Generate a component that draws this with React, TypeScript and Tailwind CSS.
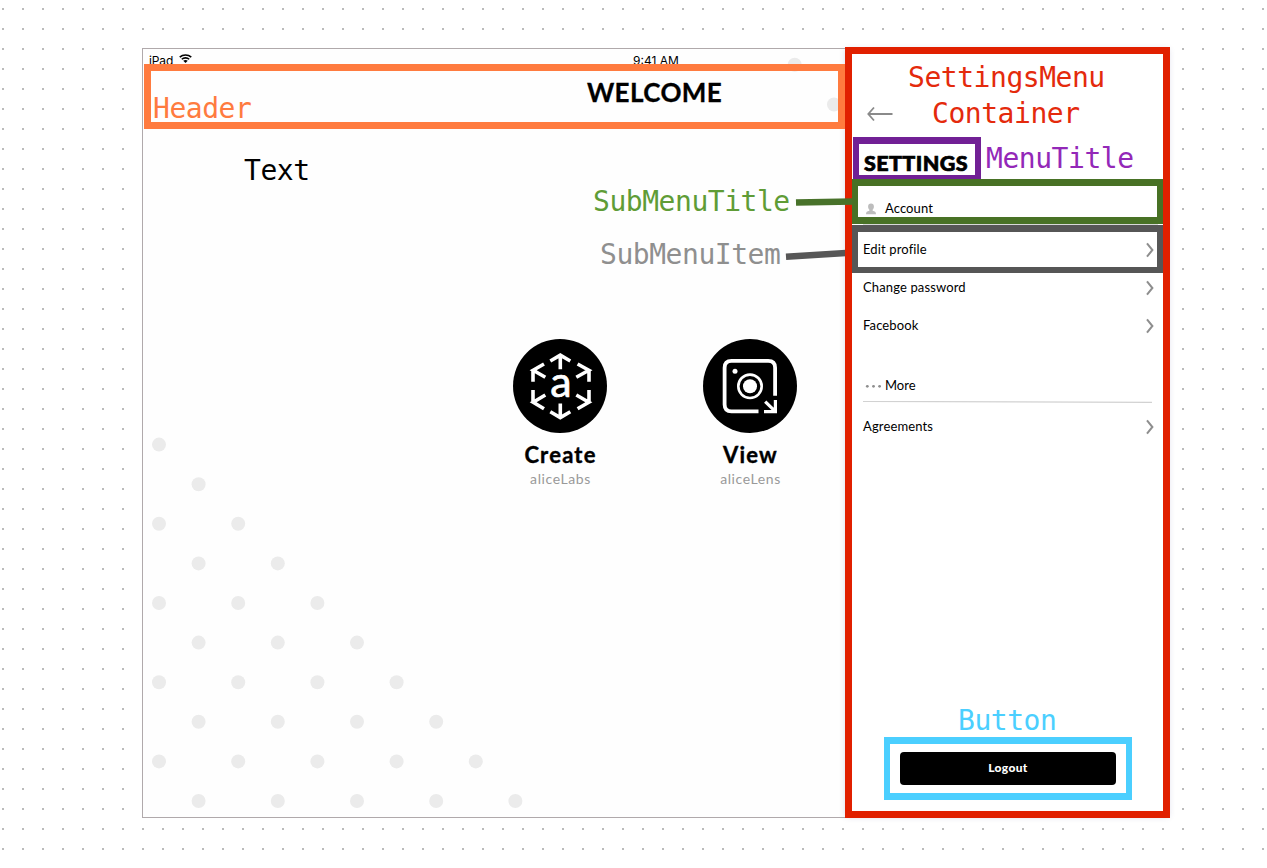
import React from "react";

const label =
  "absolute whitespace-pre font-['DejaVu_Sans_Mono',monospace] text-[28px] leading-none tracking-[-0.46px]";

function DotPattern() {
  const dots: [number, number][] = [];
  for (let row = 0; row < 10; row++) {
    for (let col = row % 2; col <= row; col += 2) {
      dots.push([16 + col * 39.6, 395.6 + row * 39.6]);
    }
  }
  dots.push([651.7, 15.7], [691, 55.5]);
  return (
    <svg className="absolute inset-0" width="1026" height="768" fill="#ebebeb">
      {dots.map(([x, y]) => (
        <circle key={`${x}-${y}`} cx={x} cy={y} r="7" />
      ))}
    </svg>
  );
}

function WifiIcon() {
  return (
    <svg className="mt-[1px]" width="13" height="9.3" viewBox="0 0 14 10" fill="none" stroke="#000" strokeWidth="1.7">
      <path d="M0.8 3.4C4.2 0.2 9.8 0.2 13.2 3.4" />
      <path d="M3 5.7C5.2 3.6 8.8 3.6 11 5.7" />
      <path d="M7 9.6L4.6 7.2C6 6.2 8 6.2 9.4 7.2Z" fill="#000" stroke="none" />
    </svg>
  );
}

function CreateIcon() {
  return (
    <svg width="94" height="94" viewBox="0 0 94 94">
      <circle cx="47" cy="47" r="47" />
      <g fill="none" stroke="#fff" strokeWidth="3.6">
        <path d="M47.3 16.5V30.3M37.3 22L47.3 16.2L57.3 22" />
        <path d="M47.3 64.5V78.5M37.3 72.8L47.3 78.6L57.3 72.8" />
        <path d="M20 42.8V30.6M31 25L20.2 31.2L32.3 38.2" />
        <path d="M76 42.8V30.6M64.6 25L75.8 31.2L63.3 38.2" />
        <path d="M20 51V63.6M31 69.8L20.2 63.2L32.3 56" />
        <path d="M76 51V63.6M64.6 69.8L75.8 63.2L63.3 56" />
      </g>
      <text
        x="48"
        y="57.8"
        textAnchor="middle"
        fill="#fff"
        stroke="#fff"
        strokeWidth="0.7"
        className="font-['Lato',sans-serif] text-[43px] font-normal"
      >
        a
      </text>
    </svg>
  );
}

function ViewIcon() {
  return (
    <svg width="94" height="94" viewBox="0 0 94 94">
      <circle cx="47" cy="47" r="47" />
      <g fill="none" stroke="#fff">
        <path strokeWidth="3.8" d="M72.1 56.7V28.8Q72.1 21.9 65.2 21.9H28.5Q21.6 21.9 21.6 28.8V65.5Q21.6 72.4 28.5 72.4H55.5" />
        <circle cx="47" cy="47.3" r="11.7" strokeWidth="2.6" />
        <path strokeWidth="3.2" d="M72.4 61V72.6H61M62.2 62.6L72 72.2" />
      </g>
      <circle cx="47" cy="47.3" r="7" fill="#fff" />
      <circle cx="32" cy="32.2" r="2.5" fill="#fff" />
    </svg>
  );
}

function Tile({ icon, title, subtitle }: { icon: React.ReactNode; title: string; subtitle: string }) {
  return (
    <div className="flex w-[94px] flex-col items-center">
      {icon}
      <div className="mt-[8px] pl-[1px] text-[22px] leading-7 font-bold tracking-[1.2px] [-webkit-text-stroke:0.4px_black]">
        {title}
      </div>
      <div className="pl-[1px] text-[14px] leading-5 tracking-[0.6px] text-[#999]">{subtitle}</div>
    </div>
  );
}

function MenuItem({ text }: { text: string }) {
  return (
    <div className="flex h-[38px] items-center justify-between pr-[15px] text-[13px] tracking-[0.13px]">
      <span>{text}</span>
      <svg width="8" height="16" viewBox="0 0 8 16" fill="none" stroke="#8e8e8e" strokeWidth="2">
        <path d="M1 1.3L6.4 8L1 14.7" />
      </svg>
    </div>
  );
}

function SettingsDrawer() {
  return (
    <aside className="absolute top-0 right-0 flex h-[768px] w-[324px] flex-col bg-white pl-[18px] shadow-[0_0_6px_rgba(60,60,140,0.18)]">
      <div className="mt-[50px] flex h-[30px] items-center pl-[4px]">
        <svg width="26" height="16" viewBox="0 0 26 16" fill="none" stroke="#8a8a8a" strokeWidth="1.8">
          <path d="M25.5 8H1.5M7 1.5L1.3 8L7 14.5" />
        </svg>
      </div>
      <h2 className="mt-[19px] pl-[1px] text-[21.5px] leading-[30px] font-black tracking-[0.4px] [-webkit-text-stroke:0.7px_black]">
        SETTINGS
      </h2>
      <div className="mt-[16px] mr-[11px] flex h-[31px] items-center border-b border-[#d8d8d8] text-[13px]">
        <svg className="ml-[3px]" width="10" height="12" viewBox="0 0 11 12" fill="#bdbdbd">
          <path d="M5.5 0C7.6 0 8.7 1.3 8.7 3.2C8.7 5 8 6.2 7.3 6.9V8C9.8 8.5 11 9.2 11 11.8H0C0 9.2 1.2 8.5 3.7 8V6.9C3 6.2 2.3 5 2.3 3.2C2.3 1.3 3.4 0 5.5 0Z" />
        </svg>
        <span className="ml-[9px] tracking-[0.1px]">Account</span>
      </div>
      <div className="mt-[6px]">
        <MenuItem text="Edit profile" />
        <MenuItem text="Change password" />
        <MenuItem text="Facebook" />
      </div>
      <div className="mt-[26px] flex h-[30px] items-center text-[13px]">
        <svg className="ml-[2px]" width="17" height="4" viewBox="0 0 17 4" fill="#8e8e8e">
          <circle cx="2.3" cy="2.3" r="1.4" />
          <circle cx="8.5" cy="2.3" r="1.4" />
          <circle cx="14.6" cy="2.3" r="1.4" />
        </svg>
        <span className="ml-[3px]">More</span>
      </div>
      <svg width="290" height="2" viewBox="0 0 290 2">
        <path d="M0 .4L289 1.3" stroke="#d2d2d2" strokeWidth="1.2" />
      </svg>
      <div className="mt-[5px]">
        <MenuItem text="Agreements" />
      </div>
      <button className="mt-auto mb-[32px] ml-[37px] h-[33px] w-[216px] rounded-[4px] bg-black pb-[2px] text-[12px] font-black tracking-[0.35px] text-white">
        Logout
      </button>
    </aside>
  );
}

function Annotations() {
  return (
    <div className="pointer-events-none absolute inset-0">
      <div className="absolute top-[64px] left-[144px] h-[65px] w-[701px] border-[7px] border-[#ff7b3f]" />
      <svg className="absolute inset-0" width="1267" height="868">
        <path d="M786 256.7L850 252.8" stroke="#575757" strokeWidth="6.5" />
      </svg>
      <div className="absolute top-[47px] left-[845px] h-[771px] w-[325px] border-[7px] border-[#e12000]" />
      <svg className="absolute inset-0" width="1267" height="868">
        <path d="M796 202.6L853 201.4" stroke="#48722a" strokeWidth="6.5" />
      </svg>
      <div className="absolute top-[137px] left-[853px] h-[45px] w-[128px] border-x-[6px] border-y-[7px] border-[#712095]" />
      <div className="absolute top-[179px] left-[852px] h-[45px] w-[311px] border-x-[6px] border-y-[7px] border-[#487125]" />
      <div className="absolute top-[225px] left-[852px] h-[48px] w-[311px] border-x-[6px] border-t-[7px] border-b-[6px] border-[#565656]" />
      <div className="absolute top-[737px] left-[884px] h-[63px] w-[248px] border-[7px] border-x-[6px] border-[#4bcfff]" />

      <span className={`${label} top-[95px] left-[153px] text-[#ff7b3f]`}>Header</span>
      <span className={`${label} top-[157px] left-[244px] text-black`}>Text</span>
      <span className={`${label} top-[188px] left-[593px] text-[#5f9c36]`}>SubMenuTitle</span>
      <span className={`${label} top-[241px] left-[600px] text-[#8f8f8f]`}>SubMenuItem</span>
      <span className={`${label} top-[64px] left-[908px] text-[#e42a0c]`}>SettingsMenu</span>
      <span className={`${label} top-[100px] left-[932px] text-[#e42a0c]`}>Container</span>
      <span className={`${label} top-[145px] left-[986px] text-[#9328b8]`}>MenuTitle</span>
      <span className={`${label} top-[707px] left-[958px] text-[#4bcfff]`}>Button</span>
    </div>
  );
}

export default function App() {
  return (
    <div className="relative h-[868px] w-[1267px] overflow-hidden bg-white bg-[linear-gradient(#fff_18px,transparent_18px),linear-gradient(90deg,#bbb_2px,#fff_2px)] bg-[size:20px_20px] bg-[position:2px_-10px] px-[142px] pt-[48px] font-['Lato',sans-serif] text-black">
      <div className="relative h-[770px] w-[1028px] border border-[#b0a9ab] bg-[#fefefe]">
        <DotPattern />
        <main className="relative flex flex-col">
          <div className="grid h-[15px] grid-cols-3 pt-[4px] font-['Inter',sans-serif] text-[12px] leading-[15px]">
            <div className="flex items-start gap-[6px] pl-[6px]">
              <span className="tracking-[-0.1px]">iPad</span>
              <WifiIcon />
            </div>
            <span className="text-center">9:41 AM</span>
          </div>
          <header className="flex h-[65px] items-start justify-center pt-[11px]">
            <h1 className="mr-[3px] text-[26px] leading-[34px] font-bold tracking-[0.4px] [-webkit-text-stroke:0.3px_black]">
              WELCOME
            </h1>
          </header>
          <div className="mt-[210px] flex justify-center gap-[96px] pr-[2px]">
            <Tile icon={<CreateIcon />} title="Create" subtitle="aliceLabs" />
            <Tile icon={<ViewIcon />} title="View" subtitle="aliceLens" />
          </div>
        </main>
        <SettingsDrawer />
      </div>
      <Annotations />
    </div>
  );
}
